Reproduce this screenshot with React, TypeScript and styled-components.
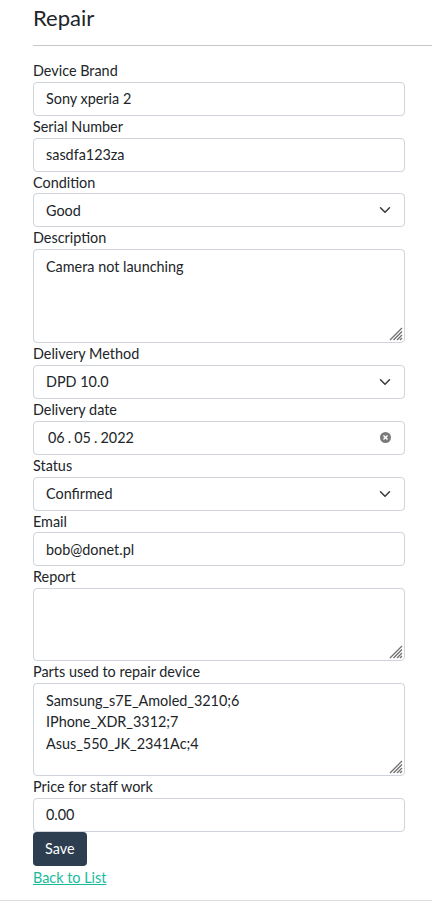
import styled, { createGlobalStyle } from "styled-components";

const GlobalStyle = createGlobalStyle`
  html, body {
    margin: 0;
    padding: 0;
    background: #ffffff;
  }
  body {
    font-family: Lato, "Open Sans", "Liberation Sans", sans-serif;
    color: #212529;
    font-size: 14.4px;
  }
  * {
    box-sizing: border-box;
  }
`;

type Option = { label: string; value: string };

const conditions: Option[] = [
  { label: "Good", value: "good" },
  { label: "Damaged", value: "damaged" },
];

function Area({ height, value }: { height: number; value: string }) {
  return (
    <AreaWrap>
      <TextArea $height={height} defaultValue={value} />
      <Grip />
    </AreaWrap>
  );
}

export default function App() {
  return (
    <Page>
      <GlobalStyle />
      <Main>
        <Title>Repair</Title>
        <Rule />
        <Form onSubmit={(e) => e.preventDefault()}>
          <Group>
            <Label>Device Brand</Label>
            <Input defaultValue="Sony xperia 2" />
          </Group>
          <Group>
            <Label>Serial Number</Label>
            <Input defaultValue="sasdfa123za" />
          </Group>
          <Group>
            <Label>Condition</Label>
            <SelectBox>
              <span>{conditions[0].label}</span>
              <Chevron />
            </SelectBox>
          </Group>
          <Group>
            <Label>Description</Label>
            <Area height={94} value="Camera not launching" />
          </Group>
          <Group>
            <Label>Delivery Method</Label>
            <SelectBox>
              <span>DPD 10.0</span>
              <Chevron />
            </SelectBox>
          </Group>
          <Group>
            <Label>Delivery date</Label>
            <SelectBox>
              <DateText>06 . 05 . 2022</DateText>
              <ClearIcon />
            </SelectBox>
          </Group>
          <Group>
            <Label>Status</Label>
            <SelectBox>
              <span>Confirmed</span>
              <Chevron />
            </SelectBox>
          </Group>
          <Group>
            <Label>Email</Label>
            <Input defaultValue="bob@donet.pl" />
          </Group>
          <Group>
            <Label>Report</Label>
            <Area height={73} value="" />
          </Group>
          <Group>
            <Label>Parts used to repair device</Label>
            <Area
              height={93}
              value={"Samsung_s7E_Amoled_3210;6\nIPhone_XDR_3312;7\nAsus_550_JK_2341Ac;4"}
            />
          </Group>
          <Group>
            <Label>Price for staff work</Label>
            <Input defaultValue="0.00" />
          </Group>
          <SaveButton type="submit">Save</SaveButton>
        </Form>
        <BackLink href="#">Back to List</BackLink>
      </Main>
      <Footer />
    </Page>
  );
}

function Chevron() {
  return (
    <svg width="12" height="12" viewBox="0 0 16 16" fill="none">
      <path
        d="M2 5l6 6 6-6"
        stroke="#343a40"
        strokeWidth="2"
        strokeLinecap="round"
        strokeLinejoin="round"
      />
    </svg>
  );
}

function ClearIcon() {
  return (
    <svg width="11" height="11" viewBox="0 0 12 12">
      <circle cx="6" cy="6" r="6" fill="#7b7b7b" />
      <path d="M3.8 3.8l4.4 4.4M8.2 3.8l-4.4 4.4" stroke="#ffffff" strokeWidth="1.6" />
    </svg>
  );
}

function Grip() {
  return (
    <GripIcon width="14" height="14" viewBox="0 0 14 14">
      <path
        d="M1 13L13 1M4.5 13L13 4.5M8 13L13 8M11 13L13 11"
        stroke="#6f6f6f"
        strokeWidth="1.3"
      />
    </GripIcon>
  );
}

const Page = styled.div`
  height: 904px;
  overflow: hidden;
  display: flex;
  flex-direction: column;
`;

const Main = styled.div`
  padding: 5px 0 0 33px;
  display: flex;
  flex-direction: column;
  align-items: flex-start;
`;

const Title = styled.h1`
  margin: 0;
  font-size: 22px;
  font-weight: 400;
  line-height: 26px;
`;

const Rule = styled.hr`
  align-self: stretch;
  border: 0;
  border-top: 1px solid #c8c8c8;
  margin: 14px 0 14px;
`;

const Footer = styled.footer`
  margin-top: 11px;
  border-top: 1px solid #dedede;
  height: 3px;
`;

const Form = styled.form`
  width: 372px;
  display: flex;
  flex-direction: column;
`;

const Group = styled.div`
  display: flex;
  flex-direction: column;
`;

const Label = styled.label`
  font-size: 14.4px;
  line-height: 21.8px;
  color: #212529;
`;

const fieldBase = `
  width: 100%;
  border: 1px solid #ced4da;
  border-radius: 4px;
  background: #ffffff;
  font-family: Lato, "Open Sans", "Liberation Sans", sans-serif;
  font-size: 14.4px;
  color: #212529;
  padding: 0 12px;
  outline: none;
`;

const Input = styled.input`
  ${fieldBase}
  height: 34px;
  line-height: 22px;
`;

const SelectBox = styled.div`
  ${fieldBase}
  height: 34px;
  display: flex;
  align-items: center;
  justify-content: space-between;
  padding-right: 13px;
`;

const DateText = styled.span`
  padding-left: 2px;
  word-spacing: -0.6px;
`;

const AreaWrap = styled.div`
  position: relative;
  display: flex;
`;

const TextArea = styled.textarea<{ $height: number }>`
  ${fieldBase}
  display: block;
  height: ${(p) => p.$height}px;
  padding: 6px 12px;
  line-height: 21.5px;
  resize: none;
`;

const GripIcon = styled.svg`
  position: absolute;
  right: 2px;
  bottom: 2px;
  pointer-events: none;
`;

const SaveButton = styled.button`
  align-self: flex-start;
  height: 34px;
  padding: 0 12px;
  border: none;
  border-radius: 4px;
  background: #2c3e50;
  color: #ffffff;
  font-family: Lato, "Open Sans", "Liberation Sans", sans-serif;
  font-size: 14.4px;
  cursor: pointer;
`;

const BackLink = styled.a`
  display: inline-block;
  margin-top: 1px;
  font-size: 14.4px;
  line-height: 22px;
  color: #18bc9c;
  text-decoration: underline;
`;
